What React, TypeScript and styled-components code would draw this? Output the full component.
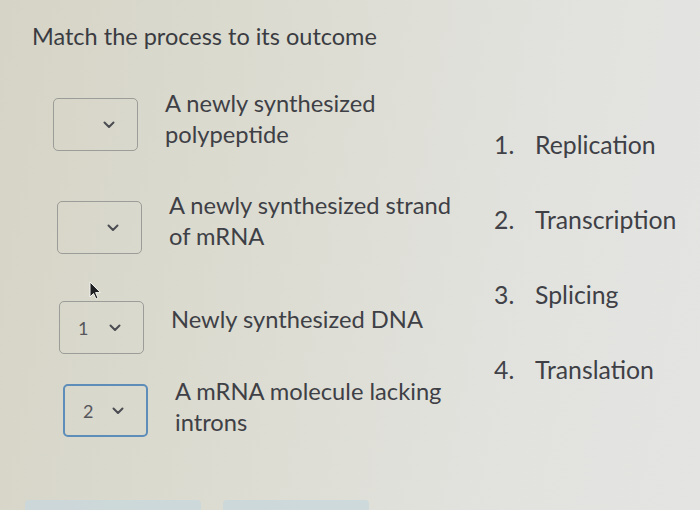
import React from "react";
import styled, { createGlobalStyle } from "styled-components";

const Global = createGlobalStyle`
  html, body { margin: 0; padding: 0; }
  body {
    width: 700px;
    height: 510px;
    overflow: hidden;
    font-family: Lato, "Open Sans", sans-serif;
    background: linear-gradient(100deg, #d6d4c6 0%, #dcdcd2 40%, #e2e3df 75%, #e4e5e2 100%);
  }
`;

const Page = styled.div`
  position: relative;
  width: 700px;
  height: 510px;
  box-sizing: border-box;
  padding: 21px 0 0 32px;
  color: #3e4046;
`;

const Title = styled.h1`
  margin: 0;
  font-size: 23.5px;
  font-weight: 400;
  line-height: 30px;
  color: #3a3c42;
`;

const Body = styled.div`
  display: grid;
  grid-template-columns: 462px 1fr;
  margin-top: 47px;
`;

const Pairs = styled.div`
  display: flex;
  flex-direction: column;
`;

const Row = styled.div<{ $top: number; $shift: number }>`
  display: flex;
  align-items: center;
  height: 53px;
  margin-top: ${(p) => p.$top}px;
  padding-left: ${(p) => p.$shift}px;
`;

const Select = styled.div<{ $active?: boolean }>`
  box-sizing: border-box;
  width: 85px;
  height: 53px;
  border: ${(p) => (p.$active ? "2px solid #5d8db8" : "1.5px solid #9c9c98")};
  border-radius: 5px;
  display: flex;
  align-items: center;
  padding: 0 22px 0 18px;
  font-size: 18px;
  color: #55575c;
  flex-shrink: 0;
`;

const Value = styled.span`
  flex: 1;
`;

const Label = styled.div<{ $lift: number }>`
  margin-left: 27px;
  margin-bottom: ${(p) => p.$lift}px;
  font-size: 23.7px;
  line-height: 31px;
  color: #3e4046;
  white-space: nowrap;
`;

const Options = styled.ol`
  list-style: none;
  margin: 0;
  padding: 0;
  display: flex;
  flex-direction: column;
  gap: 44px;
  margin-top: 31px;
`;

const Option = styled.li`
  display: flex;
  align-items: center;
  font-size: 24.8px;
  line-height: 31px;
  color: #3e4046;
`;

const Num = styled.span`
  width: 41px;
  color: #414349;
`;

const Buttons = styled.div`
  position: absolute;
  left: 25px;
  bottom: -10px;
  display: flex;
  gap: 22px;
`;

const GhostButton = styled.div<{ $w: number }>`
  width: ${(p) => p.$w}px;
  height: 20px;
  border-radius: 4px;
  background: #c9d7dc;
  opacity: 0.8;
`;

const Cursor = styled.svg`
  position: absolute;
  left: 88px;
  top: 281px;
`;

const Chevron = () => (
  <svg width="12" height="8" viewBox="0 0 12 8">
    <path d="M1.5 1.5 L6 6 L10.5 1.5" fill="none" stroke="#4a4c52" strokeWidth="2" strokeLinecap="round" strokeLinejoin="round" />
  </svg>
);

const pairs = [
  { value: "", text: ["A newly synthesized", "polypeptide"], top: 0, shift: 21, lift: 11, active: false },
  { value: "", text: ["A newly synthesized strand", "of mRNA"], top: 50, shift: 25, lift: 13, active: false },
  { value: "1", text: ["Newly synthesized DNA"], top: 47, shift: 27, lift: 17, active: false },
  { value: "2", text: ["A mRNA molecule lacking", "introns"], top: 30, shift: 31, lift: 8, active: true },
];

const options = ["Replication", "Transcription", "Splicing", "Translation"];

export default function App() {
  return (
    <>
      <Global />
      <Page>
        <Title>Match the process to its outcome</Title>
        <Body>
          <Pairs>
            {pairs.map((p, i) => (
              <Row key={i} $top={p.top} $shift={p.shift}>
                <Select $active={p.active}>
                  <Value>{p.value}</Value>
                  <Chevron />
                </Select>
                <Label $lift={p.lift}>
                  {p.text.map((t, j) => (
                    <div key={j}>{t}</div>
                  ))}
                </Label>
              </Row>
            ))}
          </Pairs>
          <Options>
            {options.map((o, i) => (
              <Option key={o}>
                <Num>{i + 1}.</Num>
                {o}
              </Option>
            ))}
          </Options>
        </Body>
        <Cursor width="16" height="20" viewBox="0 0 16 20">
          <path d="M2 1 L2 16 L5.5 12.5 L8 18 L10 17 L7.6 11.6 L12.5 11.6 Z" fill="#1e1f22" stroke="#f4f4f0" strokeWidth="1" />
        </Cursor>
        <Buttons>
          <GhostButton $w={176} />
          <GhostButton $w={146} />
        </Buttons>
      </Page>
    </>
  );
}
